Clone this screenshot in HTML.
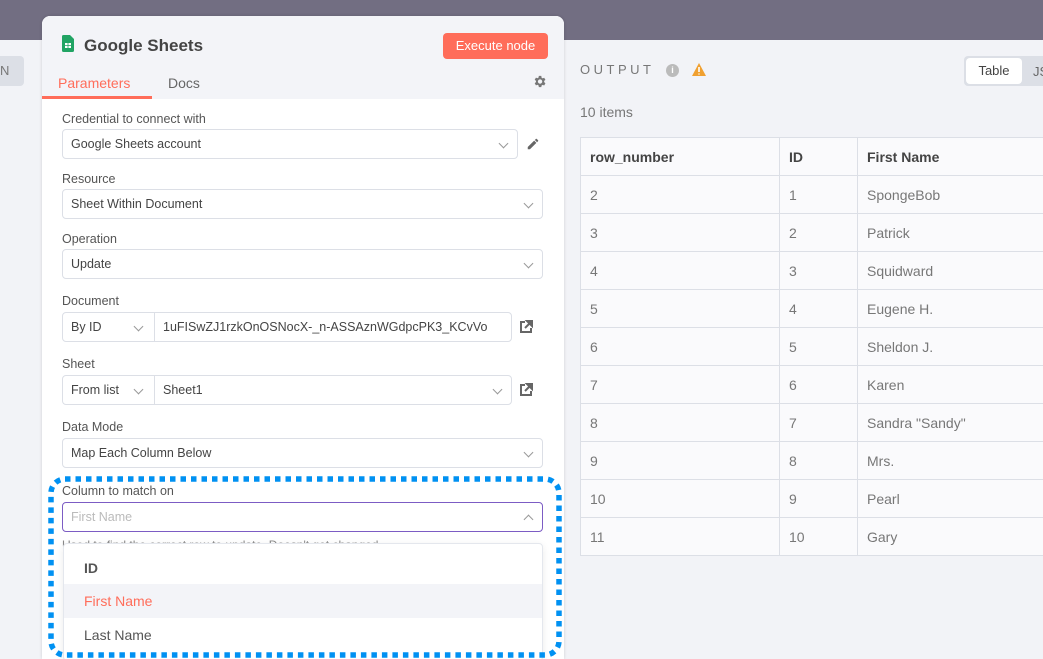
<!DOCTYPE html>
<html><head><style>
*{box-sizing:border-box;margin:0;padding:0}
html,body{width:1043px;height:659px;overflow:hidden}
body{background:#f2f3f7;font-family:"Liberation Sans",sans-serif;color:#555;position:relative;font-size:13px}
.top{position:absolute;left:0;top:0;width:1043px;height:40px;background:#726e82}
.leftbtn{position:absolute;left:-10px;top:56px;width:34px;height:30px;background:#dcdfe6;border-radius:4px;color:#777;font-size:13px;line-height:30px;padding-left:10px}
.panel{position:absolute;left:42px;top:16px;width:522px;height:643px;background:#fff;border-radius:8px 8px 0 0;box-shadow:0 0 3px rgba(0,0,0,.15);overflow:hidden}
.phead{height:83px;background:#f3f4f8;position:relative}
.title{position:absolute;left:42px;top:20px;font-size:17px;color:#444;font-weight:bold}
.exec{position:absolute;left:401px;top:17px;width:105px;height:26px;background:#ff6d5a;color:#fff;border-radius:4px;font-size:13px;text-align:center;line-height:26px}
.tab{position:absolute;top:59px;font-size:14px}
.lbl{position:absolute;left:20px;font-size:12.5px;color:#555}
.inp{position:absolute;left:20px;width:481px;height:30px;border:1px solid #dcdfe6;border-radius:4px;font-size:12.5px;line-height:28px;padding-left:8px;color:#444;background:#fff}
.chev{position:absolute;right:10px;top:10px;width:7px;height:7px;border-right:1px solid #999;border-bottom:1px solid #999;transform:rotate(45deg)}
.right{position:absolute}
table{position:absolute;left:580px;top:137px;border-collapse:collapse;background:#fafafc;table-layout:fixed;width:480px}
td{border:1px solid #dcdfe6;height:38px;padding-left:9px;font-size:14px;color:#777;white-space:nowrap}
tr:first-child td{font-weight:bold;color:#444}
</style></head><body>
<div class="top"></div>
<div class="leftbtn">N</div>
<div class="panel">
 <div class="phead">
  <svg style="position:absolute;left:20px;top:19px" width="12" height="17" viewBox="0 0 12 17"><path d="M0 1.5Q0 0 1.5 0H8L12 4V15.5Q12 17 10.5 17H1.5Q0 17 0 15.5Z" fill="#21a464"/><rect x="3" y="8" width="6" height="5" fill="#fff"/><path d="M3 10.5H9M6 8V13" stroke="#21a464" stroke-width="0.8"/></svg>
  <div class="title">Google Sheets</div>
  <div class="exec">Execute node</div>
  <div class="tab" style="left:16px;color:#ff6d5a">Parameters</div>
  <div style="position:absolute;left:0;top:80px;width:110px;height:3px;background:#ff6d5a"></div>
  <div class="tab" style="left:126px;color:#666">Docs</div>
  <svg style="position:absolute;left:490px;top:58px" width="15" height="15" viewBox="0 0 24 24"><path fill="#777" d="M19.4 13a7.5 7.5 0 000-2l2.1-1.6-2-3.5-2.5 1a7 7 0 00-1.7-1L14.9 3h-4l-.4 2.7a7 7 0 00-1.7 1l-2.5-1-2 3.5L6.4 11a7.5 7.5 0 000 2l-2.1 1.6 2 3.5 2.5-1a7 7 0 001.7 1l.4 2.9h4l.4-2.7a7 7 0 001.7-1l2.5 1 2-3.5zM12.9 15.5a3.5 3.5 0 110-7 3.5 3.5 0 010 7z"/></svg>
 </div>
 <div class="lbl" style="top:96px">Credential to connect with</div>
 <div class="inp" style="top:113px;width:456px">Google Sheets account<div class="chev"></div></div>
 <svg style="position:absolute;left:484px;top:121px" width="14" height="14" viewBox="0 0 24 24"><path fill="#666" d="M3 17.2V21h3.8L17.8 10l-3.8-3.8zM20.7 7a1 1 0 000-1.4l-2.3-2.3a1 1 0 00-1.4 0l-1.8 1.8 3.8 3.8z"/></svg>
 <div class="lbl" style="top:156px">Resource</div>
 <div class="inp" style="top:173px">Sheet Within Document<div class="chev"></div></div>
 <div class="lbl" style="top:216px">Operation</div>
 <div class="inp" style="top:233px">Update<div class="chev"></div></div>
 <div class="lbl" style="top:278px">Document</div>
 <div class="inp" style="top:296px;width:450px;padding:0">
  <div style="position:absolute;left:0;top:0;width:92px;height:28px;border-right:1px solid #dcdfe6;padding-left:8px">By ID<div class="chev" style="right:12px"></div></div>
  <div style="position:absolute;left:100px">1uFISwZJ1rzkOnOSNocX-_n-ASSAznWGdpcPK3_KCvVo</div>
 </div>
 <svg style="position:absolute;left:476px;top:303px" width="16" height="16" viewBox="0 0 16 16"><path d="M7 3H3v10h10V9" stroke="#666" stroke-width="2" fill="none"/><path d="M9 2h5v5zM13 3L7 9" stroke="#666" stroke-width="2" fill="#666"/></svg>
 <div class="lbl" style="top:341px">Sheet</div>
 <div class="inp" style="top:359px;width:450px;padding:0">
  <div style="position:absolute;left:0;top:0;width:92px;height:28px;border-right:1px solid #dcdfe6;padding-left:8px">From list<div class="chev" style="right:12px"></div></div>
  <div style="position:absolute;left:100px">Sheet1</div><div class="chev"></div>
 </div>
 <svg style="position:absolute;left:476px;top:366px" width="16" height="16" viewBox="0 0 16 16"><path d="M7 3H3v10h10V9" stroke="#666" stroke-width="2" fill="none"/><path d="M9 2h5v5zM13 3L7 9" stroke="#666" stroke-width="2" fill="#666"/></svg>
 <div class="lbl" style="top:404px">Data Mode</div>
 <div class="inp" style="top:422px">Map Each Column Below<div class="chev"></div></div>
 <div class="lbl" style="top:468px">Column to match on</div>
 <div class="inp" style="top:486px;border-color:#7c5cc4;color:#bbb">First Name<div class="chev" style="transform:rotate(225deg);top:13px"></div></div>
 <div class="lbl" style="top:522px;font-size:12px;color:#888">Used to find the correct row to update. Doesn't get changed</div>
 <div style="position:absolute;left:21px;top:527px;width:480px;height:118px;background:#fff;border:1px solid #e4e7ed;border-radius:4px;box-shadow:0 2px 8px rgba(0,0,0,.08);font-size:14px">
  <div style="padding:16px 0 0 20px;font-weight:bold;color:#555;height:40px">ID</div>
  <div style="height:34px;background:#f3f4f8;color:#ff6d5a;padding:9px 0 0 20px">First Name</div>
  <div style="height:34px;color:#555;padding:9px 0 0 20px">Last Name</div>
 </div>
</div>
<svg style="position:absolute;left:46px;top:474px" width="518" height="186"><rect x="5" y="5" width="508" height="176" rx="14" fill="none" stroke="#0091f2" stroke-width="5.5" stroke-dasharray="5.5 5"/></svg>
<div class="right" style="left:580px;top:62px;font-size:13px;letter-spacing:3.5px;color:#777">OUTPUT</div>
<div class="right" style="left:666px;top:64px;width:13px;height:13px;border-radius:50%;background:#bbb;color:#fff;font-size:9px;text-align:center;line-height:13px;font-weight:bold">i</div>
<svg class="right" style="left:692px;top:63px" width="14" height="13" viewBox="0 0 14 13"><path d="M7 0L14 13H0z" fill="#f0a030"/><path d="M7 4v5M7 10.5v1" stroke="#fff" stroke-width="1.6"/></svg>
<div class="right" style="left:964px;top:56px;width:90px;height:30px;background:#dcdfe6;border-radius:4px"></div>
<div class="right" style="left:966px;top:58px;width:56px;height:26px;background:#fff;border-radius:4px;text-align:center;line-height:26px;font-size:13px;color:#444">Table</div>
<div class="right" style="left:1033px;top:64px;font-size:13px;color:#666">JS</div>
<div class="right" style="left:580px;top:104px;font-size:14px;color:#777">10 items</div>
<table>
<colgroup><col style="width:199px"><col style="width:78px"><col style="width:203px"></colgroup>
<tr><td>row_number</td><td>ID</td><td>First Name</td></tr>
<tr><td>2</td><td>1</td><td>SpongeBob</td></tr>
<tr><td>3</td><td>2</td><td>Patrick</td></tr>
<tr><td>4</td><td>3</td><td>Squidward</td></tr>
<tr><td>5</td><td>4</td><td>Eugene H.</td></tr>
<tr><td>6</td><td>5</td><td>Sheldon J.</td></tr>
<tr><td>7</td><td>6</td><td>Karen</td></tr>
<tr><td>8</td><td>7</td><td>Sandra "Sandy"</td></tr>
<tr><td>9</td><td>8</td><td>Mrs.</td></tr>
<tr><td>10</td><td>9</td><td>Pearl</td></tr>
<tr><td>11</td><td>10</td><td>Gary</td></tr>
</table>
</body></html>
